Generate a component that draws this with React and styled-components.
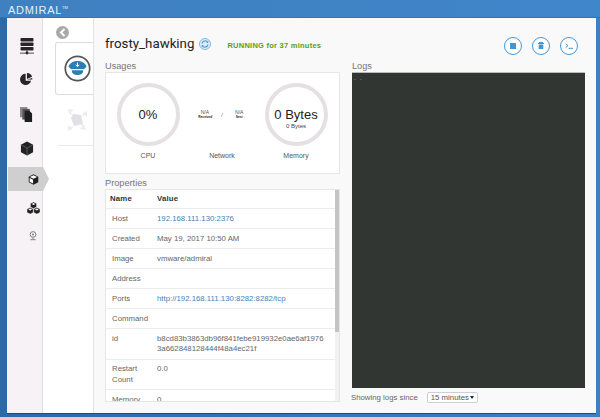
import React from 'react';
import styled, { createGlobalStyle } from 'styled-components';

const GlobalStyle = createGlobalStyle`
  html, body {
    margin: 0;
    padding: 0;
    width: 600px;
    height: 417px;
    overflow: hidden;
    font-family: "Liberation Sans", Arial, sans-serif;
  }
`;

const Shell = styled.div`
  width: 600px;
  height: 417px;
  display: flex;
  flex-direction: column;
  background: linear-gradient(90deg, #2b69a9 0%, #3273b4 40%, #3e80c2 100%);
  overflow: hidden;
`;

const Header = styled.header`
  height: 18px;
  flex: none;
  box-sizing: border-box;
  padding-left: 8px;
  color: #e6f0fa;
  font-size: 11px;
  line-height: 16px;
  letter-spacing: 0.75px;
  background: linear-gradient(90deg, #3f80c0 0%, #4086ca 100%);
  border-bottom: 1px solid #3273b4;
  sup {
    font-size: 4px;
    vertical-align: 5px;
    letter-spacing: 0;
  }
`;

const Frame = styled.div`
  flex: 1;
  min-height: 0;
  display: flex;
  margin: 0 4px 4px 7px;
  background: #f9f9f9;
  box-shadow: 0 1px 0 #1d4c7a;
`;

const Nav = styled.nav`
  width: 35px;
  flex: none;
  display: flex;
  flex-direction: column;
  padding-top: 12px;
  background: #f6f2f6;
  border-right: 1px solid #dedede;
`;

const NavItem = styled.div`
  position: relative;
  z-index: 1;
  width: 35px;
  height: ${(p) => p.$height}px;
  flex: none;
  margin-top: ${(p) => (p.$active ? 4 : 0)}px;
  margin-left: ${(p) => (p.$active ? 1 : 0)}px;
  display: flex;
  align-items: center;
  justify-content: center;
  background: ${(p) => (p.$active ? '#cfcfcf' : 'transparent')};
  svg {
    margin-left: ${(p) => p.$indent}px;
  }
  ${(p) =>
    p.$active &&
    `&::after {
      content: '';
      position: absolute;
      left: 100%;
      top: 0;
      border-style: solid;
      border-width: 12px 0 12px 6px;
      border-color: transparent transparent transparent #cfcfcf;
    }`}
`;

const Rail = styled.aside`
  width: 51px;
  flex: none;
  display: flex;
  flex-direction: column;
  padding: 8px 0 0 12px;
  box-sizing: border-box;
  background: #fff;
  border-right: 1px solid #e3e3e3;
`;

const BackButton = styled.div`
  width: 13px;
  height: 13px;
  margin-left: 1px;
  border-radius: 50%;
  background: #a9a9a9;
  display: flex;
  align-items: center;
  justify-content: center;
`;

const RailCard = styled.div`
  height: 53px;
  margin-top: 3px;
  display: flex;
  align-items: center;
  justify-content: center;
  box-sizing: border-box;
  padding-left: 6px;
  border: 1px solid #dcdcdc;
  border-right: none;
  border-radius: 3px 0 0 3px;
`;

const RailGhost = styled.div`
  height: 51px;
  display: flex;
  align-items: center;
  justify-content: center;
  box-sizing: border-box;
  padding-left: 2px;
  margin-left: 3px;
  border-bottom: 1px solid #e9e9e9;
`;

const Main = styled.main`
  flex: 1;
  min-width: 0;
  padding: 12px 11px 0 11px;
  display: flex;
  flex-direction: column;
`;

const TitleBar = styled.div`
  height: 31px;
  flex: none;
  display: flex;
  align-items: center;
`;

const Title = styled.h1`
  margin: -4px 0 0;
  font-size: 13.3px;
  font-weight: 400;
  color: #222;
  font-family: Roboto, "Liberation Sans", sans-serif;
`;

const SyncIcon = styled.span`
  display: flex;
  margin: -4px 0 0 5px;
`;

const Status = styled.span`
  margin-left: 16px;
  font-size: 7.5px;
  font-weight: 700;
  letter-spacing: 0.25px;
  color: #5d9c12;
`;

const Actions = styled.div`
  margin-left: auto;
  margin-right: 7px;
  display: flex;
  gap: 10px;
`;

const ActionButton = styled.button`
  width: 18px;
  height: 18px;
  padding: 0;
  border: 1.5px solid #3f97d8;
  border-radius: 50%;
  background: #fff;
  display: flex;
  align-items: center;
  justify-content: center;
`;

const Columns = styled.div`
  flex: 1;
  min-height: 0;
  display: grid;
  grid-template-columns: 235px 233px;
  column-gap: 12px;
`;

const Column = styled.section`
  min-height: 0;
  display: flex;
  flex-direction: column;
`;

const SectionLabel = styled.div`
  height: 11px;
  flex: none;
  margin-top: ${(p) => p.$top || 0}px;
  font-size: 9.2px;
  line-height: 10px;
  color: #777;
`;

const UsageCard = styled.div`
  height: 102px;
  flex: none;
  display: grid;
  grid-template-columns: repeat(3, 74px);
  padding: 0 5px;
  box-sizing: border-box;
  background: #fff;
  border: 1px solid #e6e6e6;
`;

const Gauge = styled.div`
  display: flex;
  flex-direction: column;
  align-items: center;
  padding-top: 10px;
`;

const Ring = styled.div`
  width: 63px;
  height: 63px;
  box-sizing: border-box;
  padding-top: ${(p) => (p.$stacked ? 8 : 0)}px;
  border: 4.5px solid #e4e0e4;
  border-radius: 50%;
  display: flex;
  flex-direction: column;
  align-items: center;
  justify-content: center;
`;

const RingValue = styled.div`
  font-size: 13px;
  line-height: 15px;
  color: #1c1c1c;
  white-space: nowrap;
`;

const RingSub = styled.div`
  font-size: 6px;
  line-height: 8px;
  color: #444;
`;

const GaugeLabel = styled.div`
  margin-top: 4px;
  font-size: 7px;
  line-height: 12px;
  color: #555;
`;

const NetworkRates = styled.div`
  height: 63px;
  display: flex;
  align-items: center;
  justify-content: center;
  gap: 10px;
  font-size: 5px;
  color: #555;
`;

const Rate = styled.div`
  text-align: center;
  line-height: 5px;
  width: 13px;
  b {
    display: block;
    color: #222;
    font-size: 3.2px;
    line-height: 4px;
  }
`;

const TablePanel = styled.div`
  flex: 1;
  min-height: 0;
  position: relative;
  margin-bottom: 11px;
  background: #fff;
  border: 1px solid #e6e6e6;
  overflow: hidden;
`;

const ScrollThumb = styled.div`
  position: absolute;
  top: 0;
  right: 0;
  bottom: 0;
  width: 4px;
  background: #f1f1f1;
  &::after {
    content: '';
    position: absolute;
    left: 0;
    right: 0;
    top: 0;
    height: 142px;
    background: #c4c4c4;
  }
`;

const Table = styled.table`
  width: 229px;
  border-collapse: collapse;
  table-layout: fixed;
  font-size: 7.8px;
  color: #666;
  line-height: 10.5px;
  th {
    text-align: left;
    font-weight: 700;
    color: #333;
    padding: 3.5px 4px 4px 4px;
    letter-spacing: 0.2px;
  }
  td {
    padding: 4.5px 4px 4px 6px;
    vertical-align: top;
    border-top: 1px solid #ececec;
  }
  td + td,
  th + th {
    padding-left: 0;
  }
  col:first-child {
    width: 51px;
  }
`;

const Link = styled.a`
  color: #4a7fb5;
  text-decoration: none;
`;

const Hash = styled.span`
  display: block;
  width: 172px;
  word-break: break-all;
  white-space: normal;
`;

const Terminal = styled.div`
  height: 316px;
  flex: none;
  box-sizing: border-box;
  padding: 2px 2px;
  background: #323633;
  border-top: 1px solid #bbb;
  color: #9a9a9a;
  font-size: 6px;
  line-height: 8px;
  letter-spacing: 1px;
`;

const LogsFooter = styled.div`
  margin-top: 4px;
  margin-left: -1px;
  display: flex;
  align-items: center;
  gap: 9px;
  font-size: 7.8px;
  color: #666;
`;

const SinceSelect = styled.div`
  width: 51px;
  height: 11px;
  box-sizing: border-box;
  padding: 0 3px;
  display: flex;
  align-items: center;
  justify-content: space-between;
  white-space: nowrap;
  font-size: 7.8px;
  color: #555;
  background: #fff;
  border: 1px solid #cfcfcf;
  border-radius: 2px;
  &::after {
    content: '';
    border-style: solid;
    border-width: 3px 2px 0 2px;
    border-color: #222 transparent transparent transparent;
  }
`;

const ServerIcon = () => (
  <svg width="14" height="17" viewBox="0 0 14 17" fill="#262626">
    <rect x="0.5" y="0" width="13" height="3.5" rx="0.8" />
    <rect x="0.5" y="4.5" width="13" height="3.5" rx="0.8" />
    <rect x="0.5" y="9" width="13" height="3.5" rx="0.8" />
    <rect x="6.5" y="12.5" width="1" height="3" />
    <rect x="0" y="14.7" width="14" height="0.8" />
    <circle cx="7" cy="15" r="1.4" />
  </svg>
);

const PieIcon = () => (
  <svg width="13" height="12" viewBox="0 0 15 14" fill="#262626">
    <path d="M6.5 1a6.5 6.5 0 1 0 6.3 8H6.5z" />
    <path d="M8 0a6.5 6.5 0 0 1 6 4.5L8 7z" />
    <path d="M8.2 7.6l5.9-1.9a7 7 0 0 1 .2 1.9z" />
  </svg>
);

const DocsIcon = () => (
  <svg width="13" height="15" viewBox="0 0 14 16">
    <rect x="0" y="0" width="8" height="11" fill="#8a8a8a" />
    <rect x="2.5" y="2" width="8" height="11.5" fill="#555" />
    <path d="M5 4h5l3 3v9H5z" fill="#1e1e1e" />
  </svg>
);

const BoxIcon = () => (
  <svg width="14" height="15" viewBox="0 0 15 15">
    <path d="M7.5 0L14 3.4v8.2L7.5 15 1 11.6V3.4z" fill="#222" />
    <path d="M7.5 7.2L14 3.4M7.5 7.2L1 3.4M7.5 7.2V15" stroke="#777" strokeWidth="0.7" fill="none" />
  </svg>
);

const CubeIcon = () => (
  <svg width="11" height="11" viewBox="0 0 15 15">
    <path d="M7.5 0.5L14 3.8v7.6l-6.5 3.3L1 11.4V3.8z" fill="#1d1d1d" />
    <path d="M7.5 1.8L12.4 4.2 7.5 6.6 2.6 4.2z" fill="#fff" />
    <path d="M2.2 5.3l4.7 2.4v5.4L2.2 10.7z" fill="#fff" />
  </svg>
);

const ClusterIcon = () => (
  <svg width="13" height="12" viewBox="0 0 14 13">
    <g fill="#1f1f1f" stroke="#fff" strokeWidth="0.4">
      <path d="M7 0l3.3 1.7v3.6L7 7 3.7 5.3V1.7z" />
      <path d="M3.4 6l3.3 1.7v3.6L3.4 13 0 11.3V7.7z" />
      <path d="M10.6 6L14 7.7v3.6L10.6 13l-3.3-1.7V7.7z" />
    </g>
    <path d="M7 1L9 2.1 7 3.2 5 2.1zM3.4 7l2 1.1-2 1.1-2-1.1zM10.6 7l2 1.1-2 1.1-2-1.1z" fill="#fff" />
  </svg>
);

const NodeIcon = () => (
  <svg width="8" height="10" viewBox="0 0 10 13" fill="none" stroke="#6e6e6e">
    <circle cx="5" cy="4.5" r="3.7" strokeWidth="1.1" />
    <circle cx="5" cy="4.5" r="1.4" fill="#8a8a8a" stroke="none" />
    <path d="M5 8.5v2M1.5 11.3h7" strokeWidth="1.1" />
  </svg>
);

const HatLogo = () => (
  <svg width="27" height="27" viewBox="0 0 27 27">
    <circle cx="13.5" cy="13.5" r="12.2" fill="#fff" stroke="#555" strokeWidth="1.7" />
    <path d="M4.5 11.5C6 7.5 10 6 13.5 6s7.5 1.5 9 5.5c-1 1.6-2.5 2.6-3.5 3H8c-1-.4-2.5-1.4-3.5-3z" fill="#2a7db5" />
    <path d="M8 15.3h11v1.4c0 1.8-2.5 3.3-5.5 3.3S8 18.5 8 16.7z" fill="#2a7db5" />
    <path d="M8 14.5h11" stroke="#fff" strokeWidth="0.8" />
    <path d="M13.5 7.5v3.7M11.7 9.8l1.8 1.8 1.8-1.8" stroke="#fff" strokeWidth="1" fill="none" />
  </svg>
);

const GhostLogo = () => (
  <svg width="24" height="24" viewBox="0 0 24 24" fill="#ececec">
    <path d="M8 6l8 1 2 9-9 2-3-8z" fill="#e2e0e4" />
    <path d="M3 1l6 1-3 2 1 3-3-1zM22 3v6l-2-2-3 1 1-3zM21 22l-6-1 2-2-1-3 3 1zM3 23v-6l2 2 3-1-1 3z" />
  </svg>
);

const SyncGlyph = () => (
  <svg width="12" height="12" viewBox="0 0 13 13" fill="none">
    <circle cx="6.5" cy="6.5" r="6" fill="#dcebf8" stroke="#7db5e3" />
    <path d="M3.2 6A3.4 3.4 0 0 1 9.4 4.6M9.8 7a3.4 3.4 0 0 1-6.2 1.4" stroke="#3f8fd6" strokeWidth="1.1" />
    <path d="M10 2.9v2.3H7.8zM3 10.1V7.8h2.2z" fill="#3f8fd6" />
  </svg>
);

const rows = [
  ['Host', <Link key="h">192.168.111.130:2376</Link>],
  ['Created', 'May 19, 2017 10:50 AM'],
  ['Image', 'vmware/admiral'],
  ['Address', ''],
  ['Ports', <Link key="p">http://192.168.111.130:8282:8282/tcp</Link>],
  ['Command', ''],
  ['id', <Hash key="i">b8cd83b3863db96f841febe919932e0ae6af1976 3a662848128444f48a4ec21f</Hash>],
  ['Restart Count', '0.0'],
  ['Memory', '0'],
];

const App = () => (
  <Shell>
    <GlobalStyle />
    <Header>
      ADMIRAL<sup>TM</sup>
    </Header>
    <Frame>
      <Nav>
        <NavItem $height={32} $indent={4}><ServerIcon /></NavItem>
        <NavItem $height={34} $indent={4}><PieIcon /></NavItem>
        <NavItem $height={37} $indent={4}><DocsIcon /></NavItem>
        <NavItem $height={30} $indent={4}><BoxIcon /></NavItem>
        <NavItem $height={24} $indent={16} $active><CubeIcon /></NavItem>
        <NavItem $height={34} $indent={17}><ClusterIcon /></NavItem>
        <NavItem $height={22} $indent={17}><NodeIcon /></NavItem>
      </Nav>
      <Rail>
        <BackButton>
          <svg width="7" height="9" viewBox="0 0 7 9" fill="none" stroke="#fff" strokeWidth="2">
            <path d="M5.5 1L2 4.5 5.5 8" />
          </svg>
        </BackButton>
        <RailCard><HatLogo /></RailCard>
        <RailGhost><GhostLogo /></RailGhost>
      </Rail>
      <Main>
        <TitleBar>
          <Title>frosty_hawking</Title>
          <SyncIcon><SyncGlyph /></SyncIcon>
          <Status>RUNNING for 37 minutes</Status>
          <Actions>
            <ActionButton>
              <svg width="6" height="6"><rect width="6" height="6" fill="#3f97d8" /></svg>
            </ActionButton>
            <ActionButton>
              <svg width="6" height="7" viewBox="0 0 6 7" fill="#3f97d8">
                <path d="M1 0h4v1h1v1H0V1h1zM.7 2.5h4.6V7H.7z" />
              </svg>
            </ActionButton>
            <ActionButton>
              <svg width="8" height="6" viewBox="0 0 8 6" fill="none" stroke="#3f97d8">
                <path d="M.7.7L3 2.6.7 4.5M3.5 5.3H8" />
              </svg>
            </ActionButton>
          </Actions>
        </TitleBar>
        <Columns>
          <Column>
            <SectionLabel>Usages</SectionLabel>
            <UsageCard>
              <Gauge>
                <Ring><RingValue>0%</RingValue></Ring>
                <GaugeLabel>CPU</GaugeLabel>
              </Gauge>
              <Gauge>
                <NetworkRates>
                  <Rate>N/A<b>Received</b></Rate>
                  <span>/</span>
                  <Rate>N/A<b>Sent</b></Rate>
                </NetworkRates>
                <GaugeLabel>Network</GaugeLabel>
              </Gauge>
              <Gauge>
                <Ring $stacked>
                  <RingValue>0 Bytes</RingValue>
                  <RingSub>0 Bytes</RingSub>
                </Ring>
                <GaugeLabel>Memory</GaugeLabel>
              </Gauge>
            </UsageCard>
            <SectionLabel $top={4}>Properties</SectionLabel>
            <TablePanel>
              <Table>
                <colgroup><col /><col /></colgroup>
                <thead>
                  <tr><th>Name</th><th>Value</th></tr>
                </thead>
                <tbody>
                  {rows.map(([name, value]) => (
                    <tr key={name}><td>{name}</td><td>{value}</td></tr>
                  ))}
                </tbody>
              </Table>
              <ScrollThumb />
            </TablePanel>
          </Column>
          <Column>
            <SectionLabel>Logs</SectionLabel>
            <Terminal>- -</Terminal>
            <LogsFooter>
              Showing logs since
              <SinceSelect>15 minutes</SinceSelect>
            </LogsFooter>
          </Column>
        </Columns>
      </Main>
    </Frame>
  </Shell>
);

export default App;
